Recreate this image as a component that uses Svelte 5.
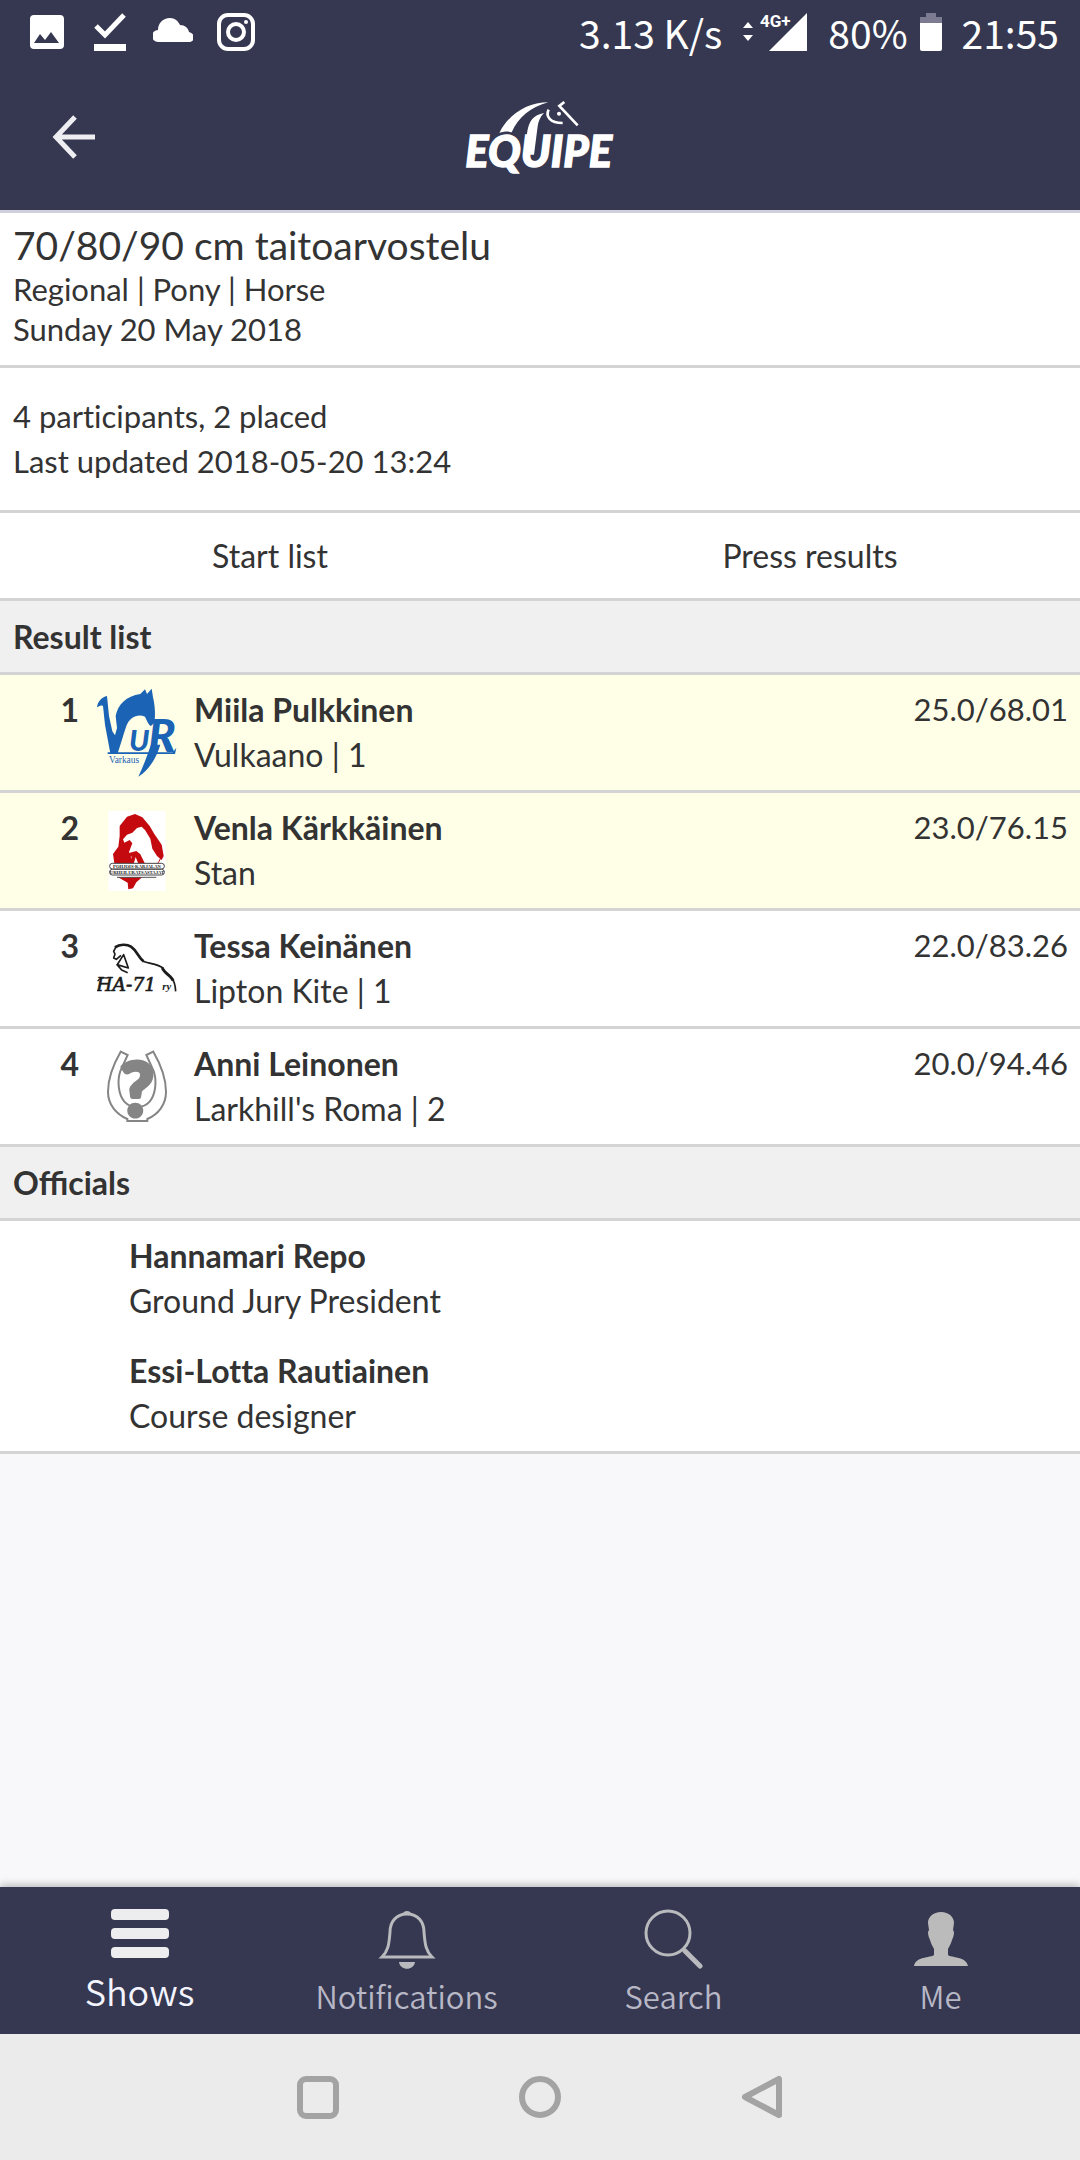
<script>
	const show = {
		title: '70/80/90 cm taitoarvostelu',
		info: 'Regional | Pony | Horse',
		date: 'Sunday 20 May 2018',
		participants: '4 participants, 2 placed',
		updated: 'Last updated 2018-05-20 13:24'
	};

	const results = [
		{ rank: 1, name: 'Miila Pulkkinen', horse: 'Vulkaano | 1', score: '25.0/68.01', logo: 'vur', placed: true },
		{ rank: 2, name: 'Venla Kärkkäinen', horse: 'Stan', score: '23.0/76.15', logo: 'pku', placed: true },
		{ rank: 3, name: 'Tessa Keinänen', horse: 'Lipton Kite | 1', score: '22.0/83.26', logo: 'ha71', placed: false },
		{ rank: 4, name: 'Anni Leinonen', horse: "Larkhill's Roma | 2", score: '20.0/94.46', logo: 'none', placed: false }
	];

	const officials = [
		{ name: 'Hannamari Repo', role: 'Ground Jury President' },
		{ name: 'Essi-Lotta Rautiainen', role: 'Course designer' }
	];

	const tabs = ['Shows', 'Notifications', 'Search', 'Me'];
	let active = $state('Shows');
</script>

<div class="screen">
	<div class="status">
		<div class="status-icons">
			<svg width="40" height="40" viewBox="0 0 36 40">
				<path fill="#fff" fill-rule="evenodd" d="M5 3h26a4 4 0 0 1 4 4v26a4 4 0 0 1-4 4H5a4 4 0 0 1-4-4V7a4 4 0 0 1 4-4zM5 31h25l-8-11-6 8-5-6z" />
			</svg>
			<svg width="40" height="40" viewBox="0 0 36 40">
				<path fill="none" stroke="#fff" stroke-width="5" d="M4 14l9 9L32 3" />
				<path fill="#fff" d="M2 32h32v7H2z" />
			</svg>
			<svg width="40" height="40" viewBox="0 0 40 40">
				<path fill="#fff" d="M5 30a6 6 0 0 1 0-12c0-7 5-12 12-12 5 0 8 3 10 7 5 0 8 3 9 7 3 1 5 3 5 5 0 3-2 5-5 5z" />
			</svg>
			<svg width="40" height="40" viewBox="0 0 40 40" fill="none" stroke="#fff">
				<rect x="3" y="3" width="34" height="34" rx="9" stroke-width="4" />
				<circle cx="20" cy="20" r="8" stroke-width="4" />
				<circle cx="30" cy="10" r="2" fill="#fff" stroke="none" />
			</svg>
		</div>
		<div class="status-info">
			<span>3.13 K/s</span>
			<svg class="signal" width="66" height="40" viewBox="0 0 66 40">
				<path fill="#fff" d="M1 16l5-6 5 6zM1 23l5 6 5-6z" />
				<path fill="#fff" d="M65 1v38H27z" />
				<text x="18" y="15" class="net">4G+</text>
			</svg>
			<span>80%</span>
			<svg class="battery" width="22" height="40" viewBox="0 0 22 40">
				<path fill="#7c7b92" d="M6 1h10v4h6v7H0V5h6z" />
				<path fill="#fff" d="M0 11h22v26a2 2 0 0 1-2 2H2a2 2 0 0 1-2-2z" />
			</svg>
			<span>21:55</span>
		</div>
	</div>

	<header>
		<button class="back" aria-label="Back">
			<svg width="44" height="44" viewBox="0 0 44 44" fill="none" stroke="#ededf2" stroke-width="5">
				<path d="M23 2L4 22l19 20M4 22h39" />
			</svg>
		</button>
		<svg class="brand" width="160" height="80" viewBox="60 22 480 240" role="img" aria-label="Equipe">
			<text x="76" y="231" class="brand-name">EQUIPE</text>
			<path fill="#fff" d="M178 130c26-54 82-92 147-92-52 13-90 45-110 90-12-4-25-2-37 2z" />
			<path fill="#fff" d="M312 70c-32 6-45 24-50 55l-10 70h30l11-85c2-14 7-28 19-40z" />
			<path fill="none" stroke="#fff" stroke-width="8" d="M326 60c-10 20 4 40 42 40" />
			<circle cx="357" cy="72" r="6" fill="#fff" />
			<path fill="none" stroke="#fff" stroke-width="8" d="M373 37l-15 12 55 58" />
		</svg>
	</header>

	<main>
		<section class="heading">
			<h1>{show.title}</h1>
			<p>{show.info}</p>
			<p>{show.date}</p>
		</section>

		<section class="summary">
			<p>{show.participants}</p>
			<p>{show.updated}</p>
		</section>

		<div class="links">
			<a href="#start">Start list</a>
			<a href="#press">Press results</a>
		</div>

		<h2>Result list</h2>
		<ul>
			{#each results as r}
				<li class="result" class:placed={r.placed}>
					<b class="rank">{r.rank}</b>
					{#if r.logo === 'vur'}
						<svg class="logo" viewBox="50 50 240 270" fill="#1b63b5">
							<path d="M50 108c2-18 14-30 30-34l6 60 10 46 8 12 6-22-4-36c6-34 32-60 74-66l14-14 6 14 14-16 4 26c6 24 8 56 4 76l-10 10c-8-4-12-16-18-28-22-10-46 2-56 28-10 30-18 58-26 82H90L74 160l-6-56c-8-4-12 2-18 4z" />
							<text x="146" y="238" class="vur-letter" font-size="88">U</text>
							<text x="204" y="242" class="vur-letter" font-size="136">R</text>
							<path d="M240 220c-14 44-34 76-66 96 14-28 26-62 38-96zM82 243h196l10-14-4 19H82z" />
							<text x="86" y="276" class="vur-town">Varkaus</text>
						</svg>
					{:else if r.logo === 'pku'}
						<svg class="logo" viewBox="50 405 240 270">
							<path fill="#fff" d="M84 420h172v240H84z" />
							<path fill="#c40a0e" d="M118 465l22-28 24-8 22 10 22 26 14 24 22 32 6 34-6 12-14-12-14-22-6-30-16-26-10-10-14 4-14 14-16 6-12 14 4 10 16-8 8 10-10 26 12 34h-56l-4-28 16-22 4-32z" />
							<path fill="#c40a0e" d="M112 618h74l-18 16-10 18-14 3-2-20zM146 546l22-6 12 10 14 28h-20l-8-20-6 20h-10l4-22-10 4z" />
							<path fill="none" stroke="#c40a0e" stroke-width="3" d="M244 544c-2 20-8 30-16 36" />
							<g fill="#fff" stroke="#444" stroke-width="3">
								<rect x="88" y="577" width="164" height="17" rx="8" />
								<rect x="88" y="595" width="164" height="17" rx="8" />
							</g>
							<path stroke="#555" stroke-width="3" d="M110 619h118" />
							<text x="170" y="590" class="pku-text">POHJOIS-KARJALAN</text>
							<text x="170" y="608" class="pku-text">URHEILURATSASTAJAT</text>
						</svg>
					{:else if r.logo === 'ha71'}
						<svg class="logo" viewBox="50 40 240 270" fill="none" stroke="#1c1c1c" stroke-linejoin="round">
							<path stroke-width="8" d="M104 110c14-10 36-10 48-2 20 14 22 34 38 44" />
							<path stroke-width="5" d="M188 152c20 8 44 6 62 22M108 106l-8 16 4 8-4 12 8 4 14-12M112 160l18-28 14 40-34-10 14 16 18 8" />
							<path stroke-width="9" d="M246 172c6 16 28 24 32 38" />
							<path stroke-width="5" d="M276 206c8 8 9 18 10 36" />
							<g fill="#1c1c1c" stroke="none">
								<text x="48" y="241" class="ha-text">HA-71</text>
								<text x="246" y="238" class="ha-small">ry</text>
							</g>
							<path stroke-width="4" d="M52 212c4-10 14-12 30-10" />
						</svg>
					{:else}
						<svg class="logo" viewBox="50 395 240 270" fill="none" stroke="#858585" stroke-width="6">
							<path d="M121 424l21 10-22 48c-10 30-6 70 12 92 20 22 56 22 76 0 18-22 22-62 12-92l-22-48 21-10c22 38 38 80 38 120 0 40-24 68-56 82v6h-60v-6c-32-14-58-42-58-82 0-40 16-82 38-120z" />
							<text x="170" y="618" class="unknown">?</text>
						</svg>
					{/if}
					<div class="rider">
						<b>{r.name}</b>
						<span>{r.horse}</span>
					</div>
					<span class="score">{r.score}</span>
				</li>
			{/each}
		</ul>

		<h2>Officials</h2>
		<ul class="officials">
			{#each officials as o}
				<li>
					<b>{o.name}</b>
					<span>{o.role}</span>
				</li>
			{/each}
		</ul>
	</main>

	<nav class="tabbar">
		{#each tabs as tab}
			<button class:active={active === tab} onclick={() => (active = tab)}>
				{#if tab === 'Shows'}
					<svg width="60" height="50" viewBox="0 0 60 50" fill="#ededf0">
						<rect x="1" width="58" height="11" rx="4" />
						<rect x="1" y="19" width="58" height="11" rx="4" />
						<rect x="1" y="38" width="58" height="11" rx="4" />
					</svg>
				{:else if tab === 'Notifications'}
					<svg width="60" height="60" viewBox="0 0 60 60">
						<path fill="none" stroke="#b9babd" stroke-width="3" d="M30 5c-11 0-17 8-17 18C12 36 11 42 5 48h50C49 42 48 36 47 23 47 13 41 5 30 5z" />
						<path fill="#b9babd" d="M26 5c0-4 8-4 8 0zM22 53h16c-1 9-15 9-16 0z" />
					</svg>
				{:else if tab === 'Search'}
					<svg width="60" height="60" viewBox="0 0 60 60" fill="none" stroke="#b9babd">
						<circle cx="24" cy="24" r="22" stroke-width="3" />
						<path stroke-width="5" stroke-linecap="round" d="M41 42l15 15" />
					</svg>
				{:else}
					<svg width="60" height="60" viewBox="0 0 60 60" fill="#bbb">
						<path d="M30 3c8 0 13 5 13 11l-1 7 1 2c0 3-1 6-2 8-1 4-3 7-4 9v6c3 3 18 1 20 11H3c2-10 17-8 20-11v-6c-1-2-3-5-4-9-1-2-2-5-2-8l1-2-1-7c0-6 5-11 13-11z" />
					</svg>
				{/if}
				<span>{tab}</span>
			</button>
		{/each}
	</nav>

	<div class="system">
		<button aria-label="Recent apps">
			<svg width="42" height="44" viewBox="0 0 42 44"><rect x="3" y="4" width="36" height="37" rx="6" /></svg>
		</button>
		<button aria-label="Home">
			<svg width="42" height="44" viewBox="0 0 42 44"><circle cx="21" cy="22" r="18" /></svg>
		</button>
		<button aria-label="Go back">
			<svg width="42" height="44" viewBox="0 0 42 44"><path stroke-linejoin="round" d="M38 4v36L4 22z" /></svg>
		</button>
	</div>
</div>

<style>
	:global(body) {
		margin: 0;
		background: #f8f8fb;
	}

	.screen {
		display: flex;
		flex-direction: column;
		min-height: 100vh;
		font: 32px/45px Lato, sans-serif;
		font-variant-ligatures: none;
		color: #333;
	}

	svg {
		display: block;
		flex: none;
	}
	button {
		border: 0;
		padding: 0;
		background: none;
		cursor: pointer;
	}
	h1, h2, p, ul {
		margin: 0;
		padding: 0;
		list-style: none;
	}

	.status {
		display: flex;
		justify-content: space-between;
		align-items: center;
		height: 63px;
		padding: 0 21px 0 27px;
		background: #353850;
		color: #fff;
		font: 39px/54px 'Noto Sans CJK SC', sans-serif;
	}
	.status-icons,
	.status-info {
		display: flex;
		align-items: center;
	}
	.status-icons {
		gap: 23px;
	}
	.signal {
		margin: 0 20px;
	}
	.battery {
		margin: 0 20px 0 12px;
	}
	.net {
		fill: #fff;
		font: bold 17px Roboto, sans-serif;
	}

	header {
		display: grid;
		grid-template-columns: 1fr auto 1fr;
		align-items: center;
		height: 147px;
		padding: 0 52px;
		background: #353850;
		border-bottom: 3px solid #d0cfdd;
	}
	.brand {
		overflow: visible;
	}
	.brand-name {
		fill: #fff;
		stroke: #fff;
		stroke-width: 4;
		font: italic 900 130px/1 Lato, sans-serif;
	}

	main {
		flex: 1;
	}
	section,
	.links,
	h2,
	.result,
	.officials {
		border-bottom: 3px solid #d4d4d4;
		background: #fff;
	}
	.heading,
	.summary,
	.score {
		font-size: 31px;
	}
	.heading {
		padding: 8px 13px 16px;
		line-height: 40px;
	}
	h1 {
		font-size: 39px;
		font-weight: 400;
		line-height: 48px;
	}
	.summary {
		padding: 26px 13px;
	}
	.links {
		display: flex;
	}
	.links a {
		flex: 1;
		padding: 20px 0;
		color: inherit;
		text-align: center;
		text-decoration: none;
	}
	h2 {
		padding: 13px;
		background: #f0f0f0;
		font-size: 32px;
		font-weight: 700;
		font-variant-ligatures: normal;
	}

	.result {
		display: flex;
		height: 115px;
	}
	.result.placed {
		background: #ffffe8;
	}
	.rank {
		box-sizing: border-box;
		width: 97px;
		padding: 12px 18px 0 0;
		text-align: right;
	}
	.logo {
		width: 80px;
		height: 90px;
		align-self: center;
	}
	.rider {
		display: flex;
		flex: 1;
		flex-direction: column;
		padding: 12px 0 0 17px;
	}
	.score {
		padding: 12px 12px 0 0;
	}
	.vur-letter {
		font-family: Lato, sans-serif;
		font-style: italic;
		font-weight: 900;
	}
	.vur-town {
		font: 28px/1 'Liberation Serif', serif;
	}
	.pku-text {
		fill: #222;
		font: bold 14px/1 'Liberation Serif', serif;
		text-anchor: middle;
	}
	.ha-text {
		font: italic 56px/1 'DejaVu Serif', serif;
		stroke: #1c1c1c;
		stroke-width: 2;
	}
	.ha-small {
		font: italic bold 32px/1 'Liberation Serif', serif;
	}
	.unknown {
		fill: #858585;
		stroke: #858585;
		stroke-width: 12;
		stroke-linejoin: round;
		font: 900 220px/1 Lato, sans-serif;
		text-anchor: middle;
	}

	.officials li {
		display: flex;
		flex-direction: column;
		padding: 12px 13px 13px 129px;
	}

	.tabbar {
		display: flex;
		height: 147px;
		padding: 0 6px;
		background: #353850;
		box-shadow: 0 -2px 8px #0004;
	}
	.tabbar button {
		display: flex;
		flex: 1;
		flex-direction: column;
		align-items: center;
		padding-top: 22px;
		color: #b8b7c6;
		font: 350 31px/50px 'Noto Sans CJK SC', sans-serif;
	}
	.tabbar span {
		margin-top: 2px;
	}
	.tabbar .active {
		color: #f4f4ff;
		font-size: 36px;
	}
	.tabbar .active span {
		margin-top: 6px;
	}

	.system {
		display: flex;
		justify-content: center;
		align-items: center;
		gap: 180px;
		height: 126px;
		background: #ebebeb;
	}
	.system svg {
		fill: none;
		stroke: #a3a3a3;
		stroke-width: 6;
	}
</style>
